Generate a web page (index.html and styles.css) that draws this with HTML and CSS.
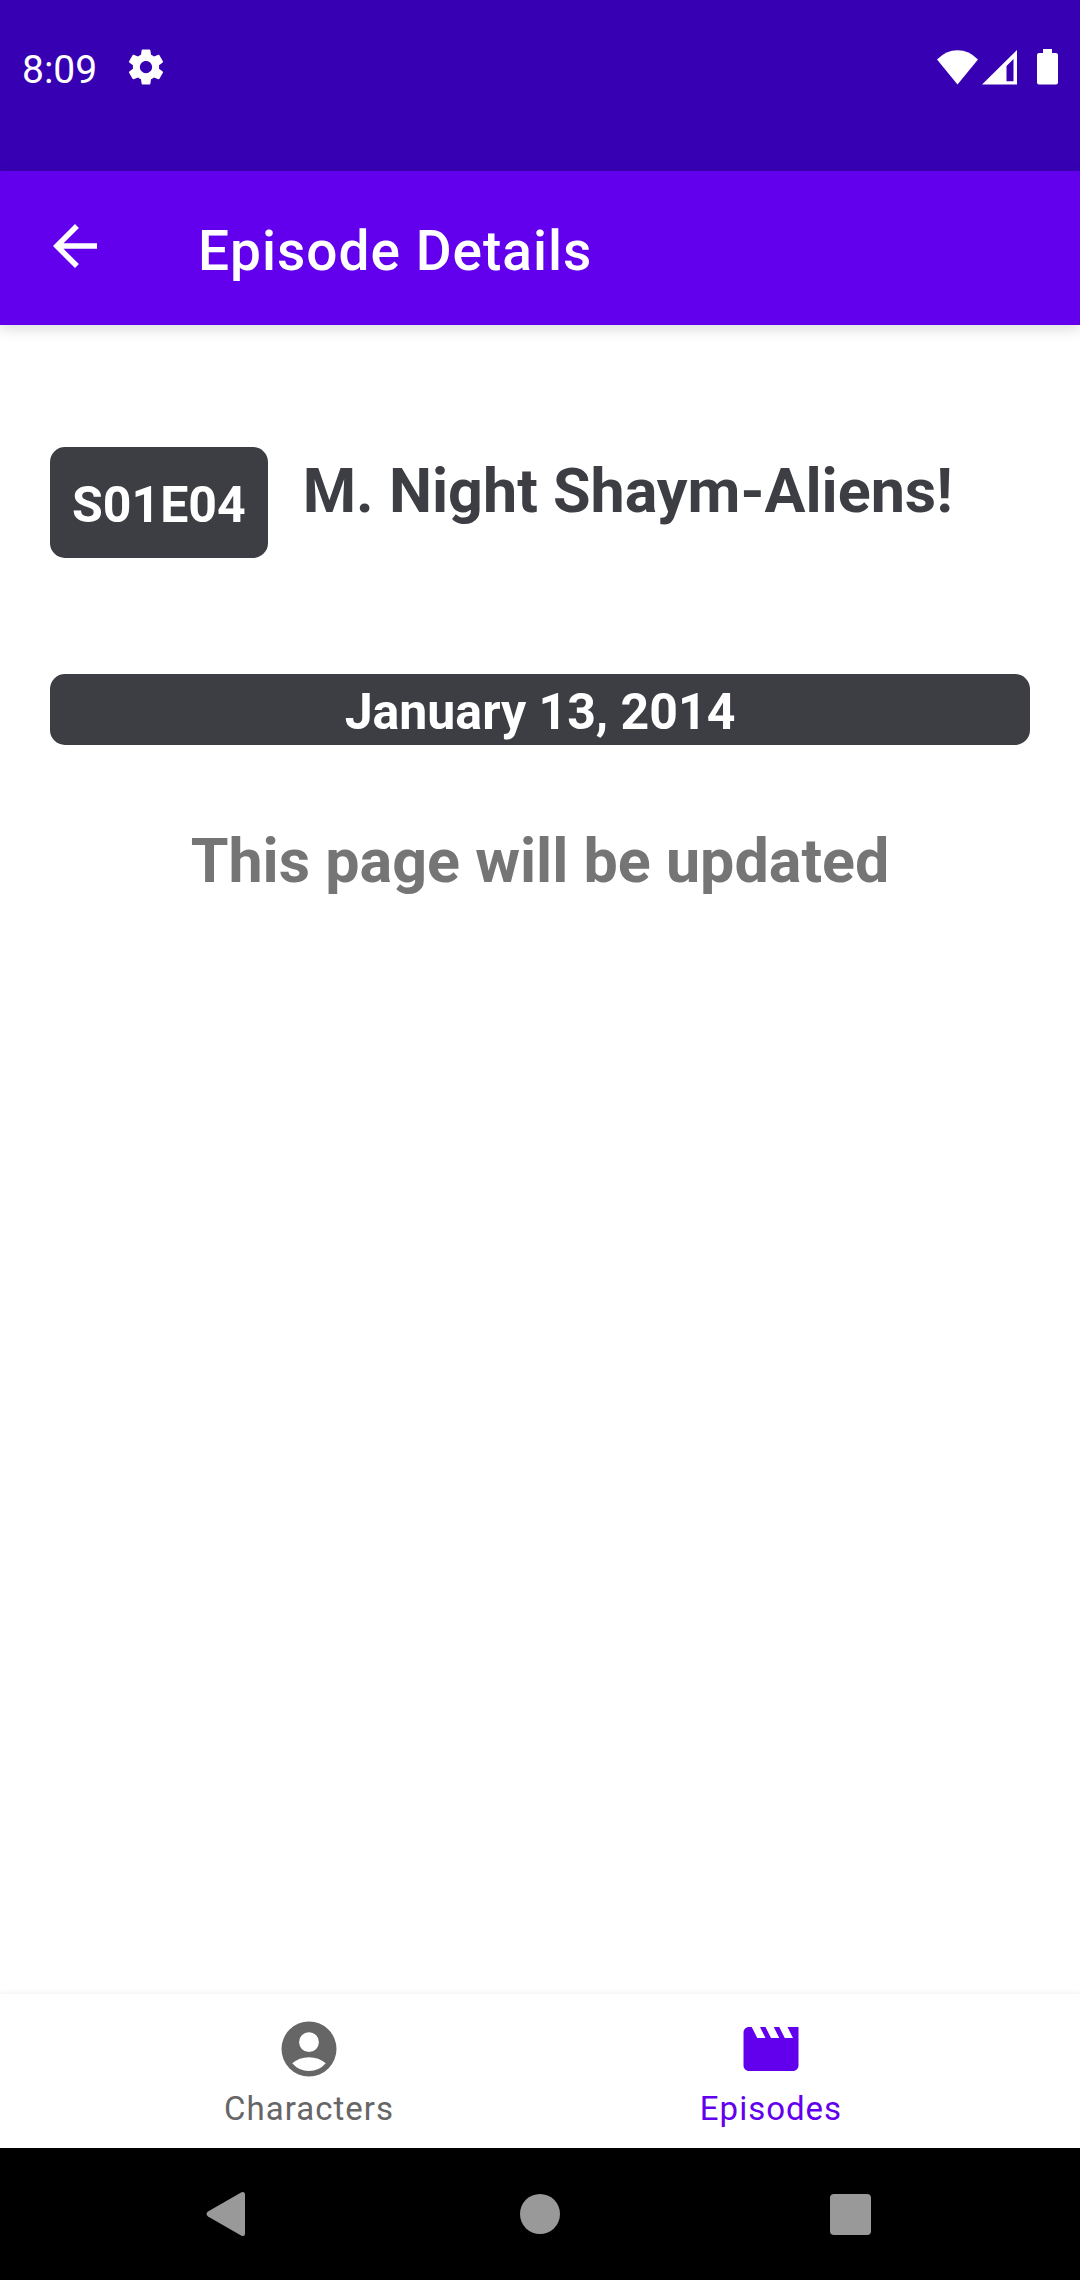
FILE: index.html
```html
<!DOCTYPE html>
<html lang="en">
<head>
  <meta charset="utf-8">
  <meta name="viewport" content="width=device-width, initial-scale=1">
  <title>Episode Details</title>
  <link rel="stylesheet" href="styles.css">
</head>
<body>
  <div class="status-bar">
    <div class="status-group status-left">
      <time class="clock">8:09</time>
      <svg class="status-icon" width="42" height="42" viewBox="0 0 24 24" aria-hidden="true"><path d="M19.43 12.98c.04-.32.07-.64.07-.98s-.03-.66-.07-.98l2.11-1.65c.19-.15.24-.42.12-.64l-2-3.46c-.12-.22-.39-.3-.61-.22l-2.49 1c-.52-.4-1.08-.73-1.69-.98l-.38-2.65C14.46 2.18 14.25 2 14 2h-4c-.25 0-.46.18-.49.42l-.38 2.65c-.61.25-1.17.59-1.69.98l-2.49-1c-.23-.09-.49 0-.61.22l-2 3.46c-.13.22-.07.49.12.64l2.11 1.65c-.04.32-.07.65-.07.98s.03.66.07.98l-2.11 1.65c-.19.15-.24.42-.12.64l2 3.46c.12.22.39.3.61.22l2.49-1c.52.4 1.08.73 1.69.98l.38 2.65c.03.24.24.42.49.42h4c.25 0 .46-.18.49-.42l.38-2.65c.61-.25 1.17-.59 1.69-.98l2.49 1c.23.09.49 0 .61-.22l2-3.46c.12-.22.07-.49-.12-.64l-2.11-1.65zM12 15.5c-1.93 0-3.5-1.57-3.5-3.5s1.57-3.5 3.5-3.5 3.500 1.570 3.500 3.500-1.570 3.500-3.500 3.500z"/></svg>
    </div>
    <div class="status-group status-right">
      <svg class="status-icon" width="41" height="42" viewBox="0 0 41 42" aria-hidden="true"><path d="M20.500 38.500L0 13.500Q9 4.300 20.500 4.300T41 13.500Z"/></svg>
      <svg class="status-icon" width="35" height="42" viewBox="0 0 35 42" aria-hidden="true"><path fill-rule="evenodd" d="M35 4V38.500H0ZM31.500 13L24.500 20V35.200H31.500Z"/></svg>
      <svg class="status-icon battery" width="21" height="42" viewBox="0 0 21 42" aria-hidden="true"><path d="M6 3H15V7H19Q21 7 21 9V36.500Q21 38.500 19 38.500H2Q0 38.500 0 36.500V9Q0 7 2 7H6Z"/></svg>
    </div>
  </div>

  <header class="app-bar">
    <button class="back-button" type="button" aria-label="Navigate up">
      <svg width="66" height="66" viewBox="0 0 24 24" aria-hidden="true"><path d="M20 11H7.830l5.590-5.590L12 4l-8 8 8 8 1.410-1.410L7.830 13H20v-2z"/></svg>
    </button>
    <h1 class="app-title">Episode Details</h1>
  </header>

  <main class="content">
    <div class="episode">
      <span class="chip episode-code">S01E04</span>
      <h2 class="episode-name">M. Night Shaym-Aliens!</h2>
    </div>
    <time class="chip air-date" datetime="2014-01-13">January 13, 2014</time>
    <p class="notice">This page will be updated</p>
  </main>

  <nav class="tabs" aria-label="Sections">
    <a class="tab" href="#characters">
      <svg width="66" height="66" viewBox="0 0 24 24" aria-hidden="true"><path fill-rule="evenodd" d="M12 2a10 10 0 1 0 0 20a10 10 0 1 0 0-20zM12 5.900a3.600 3.600 0 1 1 0 7.200a3.600 3.600 0 1 1 0-7.200zM5.900 17.200Q8.400 15 12 15T18.100 17.200Q15.700 20 12 20T5.900 17.200z"/></svg>
      <span>Characters</span>
    </a>
    <a class="tab tab-active" href="#episodes" aria-current="page">
      <svg width="66" height="66" viewBox="0 0 24 24" aria-hidden="true"><path d="M18 4l2 4h-3l-2-4h-2l2 4h-3l-2-4H8l2 4H7L5 4H4c-1.100 0-1.990.9-1.990 2L2 18c0 1.100.9 2 2 2h16c1.100 0 2-.9 2-2V4h-4z"/></svg>
      <span>Episodes</span>
    </a>
  </nav>

  <div class="system-nav">
    <button class="system-button" type="button" aria-label="Back">
      <svg width="48" height="48" viewBox="0 0 48 48"><path d="M2 21.500L35.500 2.300Q39 1 39 4.500V43.500Q39 47 35.500 45.700L2 26.500Q-1 24 2 21.500Z"/></svg>
    </button>
    <button class="system-button" type="button" aria-label="Home">
      <svg width="48" height="48" viewBox="0 0 48 48"><circle cx="24" cy="24" r="20"/></svg>
    </button>
    <button class="system-button" type="button" aria-label="Recent apps">
      <svg width="48" height="48" viewBox="0 0 48 48"><rect x="4" y="4" width="41" height="41" rx="4"/></svg>
    </button>
  </div>
</body>
</html>
```
FILE: styles.css
```css
* {
  box-sizing: border-box;
}

body {
  margin: 0;
  min-height: 100vh;
  display: flex;
  flex-direction: column;
  background: #fff;
  font-family: Roboto, "Liberation Sans", sans-serif;
}

h1,
h2,
p {
  margin: 0;
}

svg {
  display: block;
  flex: none;
  fill: currentColor;
}

button {
  display: flex;
  align-items: center;
  justify-content: center;
  padding: 0;
  border: 0;
  background: none;
  color: inherit;
}

.status-bar {
  display: flex;
  justify-content: space-between;
  padding: 46px 22px 77px;
  background: #3700b3;
  color: #fff;
}

.status-group {
  display: flex;
}

.status-left {
  gap: 28px;
}

.status-right {
  gap: 4px;
}

.battery {
  margin-left: 16px;
}

.clock {
  font-size: 39px;
  line-height: 48px;
}

.app-bar {
  display: flex;
  align-items: flex-start;
  gap: 90px;
  padding: 42px 42px 41px;
  background: #6200ee;
  color: #fff;
  box-shadow: 0 4px 14px rgba(0, 0, 0, 0.14);
}

.app-title {
  padding-top: 5px;
  font-size: 55px;
  line-height: 66px;
  font-weight: 500;
  letter-spacing: 1px;
}

.content {
  flex: 1;
  display: flex;
  flex-direction: column;
  padding: 122px 50px;
}

.episode {
  display: flex;
  align-items: flex-start;
  gap: 35px;
  margin-bottom: 116px;
}

.chip {
  padding: 5px 22px 0;
  border-radius: 15px;
  background: #3c3e44;
  color: #fff;
  font-size: 50px;
  line-height: 66px;
  font-weight: 700;
  text-align: center;
}

.episode-code {
  flex: none;
  padding-top: 25px;
  padding-bottom: 20px;
}

.episode-name {
  padding-top: 8px;
  color: #3c3e44;
  font-size: 61px;
  line-height: 72px;
  font-weight: 700;
}

.notice {
  margin-top: 80px;
  color: #757575;
  font-size: 61px;
  line-height: 72px;
  font-weight: 700;
  text-align: center;
}

.tabs {
  display: flex;
  justify-content: center;
  height: 154px;
  background: #fff;
  box-shadow: 0 0 6px rgba(0, 0, 0, 0.08);
}

.tab {
  flex: 0 1 462px;
  display: flex;
  flex-direction: column;
  align-items: center;
  gap: 7px;
  padding-top: 22px;
  color: #666;
  font-size: 33px;
  line-height: 40px;
  letter-spacing: 1px;
  text-decoration: none;
}

.tab-active {
  color: #6200ee;
}

.system-nav {
  display: flex;
  justify-content: center;
  height: 132px;
  background: #000;
  color: #999;
}

.system-button {
  flex: 0 1 310px;
}
```
